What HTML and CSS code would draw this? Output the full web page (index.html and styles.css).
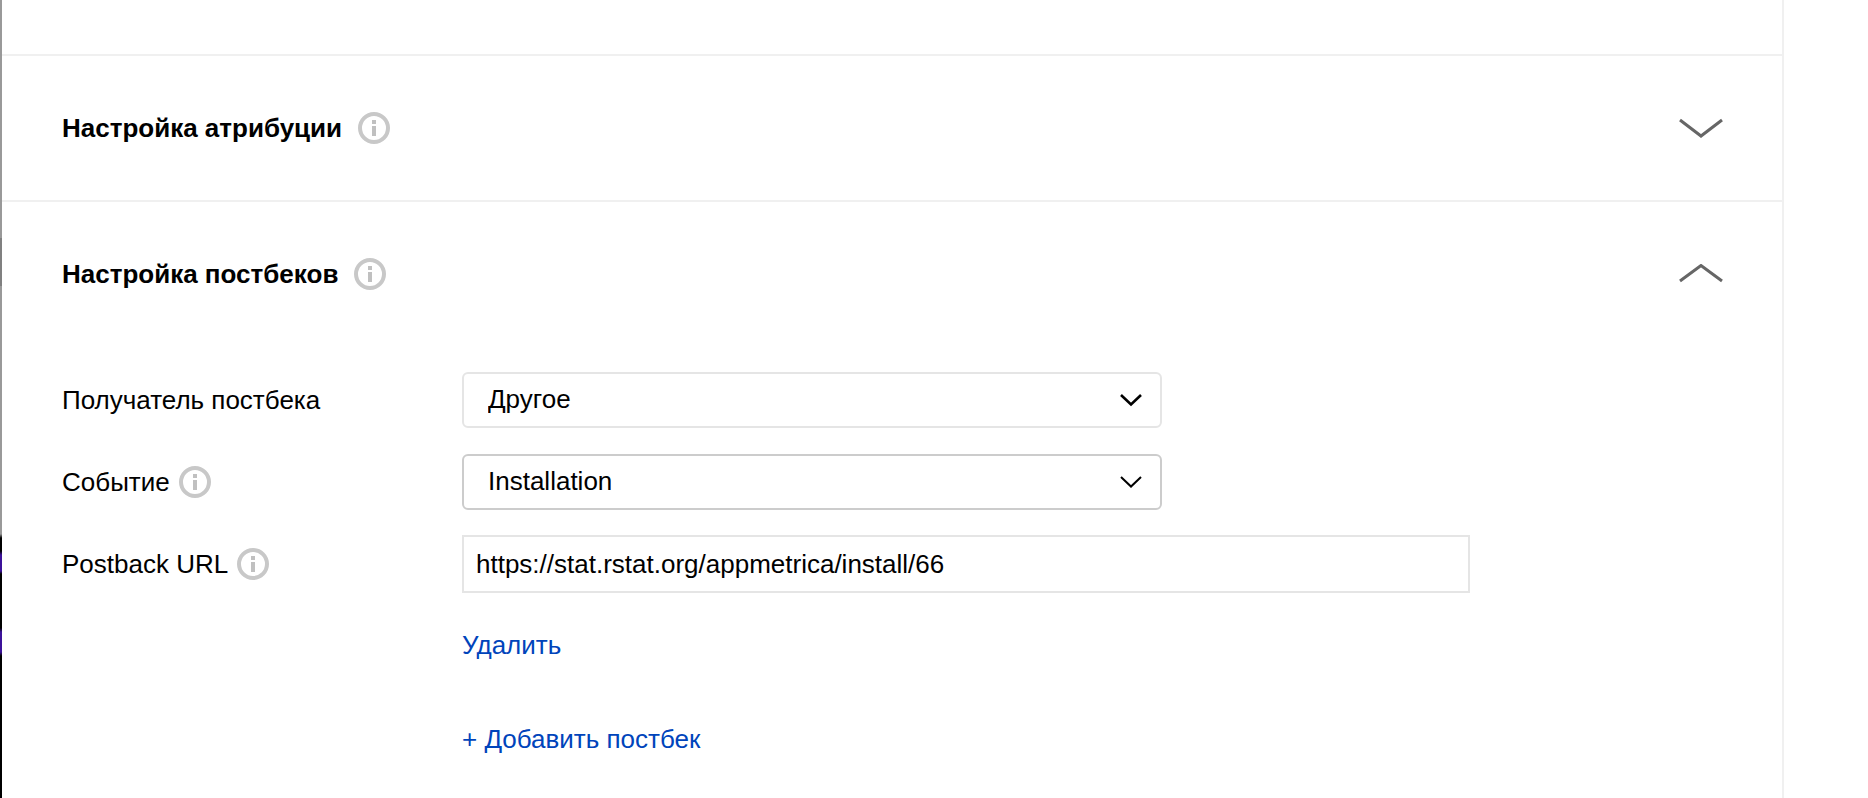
FILE: index.html
```html
<!DOCTYPE html>
<html lang="ru">
<head>
<meta charset="utf-8">
<meta name="viewport" content="width=device-width, initial-scale=1">
<title>Настройка постбеков</title>
<link rel="stylesheet" href="styles.css">
</head>
<body>
<svg class="sprite" aria-hidden="true">
  <symbol id="info" viewBox="0 0 32 32">
    <circle cx="16" cy="16" r="14" fill="none" stroke="#c8c8c8" stroke-width="4"/>
    <path d="M14 8h4v4h-4zM14 14h4v10h-4z" fill="#c0c0c0"/>
  </symbol>
  <symbol id="wide-down" viewBox="0 0 44 20">
    <path d="M1 2L22 18L43 2" fill="none" stroke="#666" stroke-width="3"/>
  </symbol>
  <symbol id="wide-up" viewBox="0 0 44 20">
    <path d="M1 17L22 1.5L43 17" fill="none" stroke="#666" stroke-width="3"/>
  </symbol>
</svg>
<div class="layout">
  <div class="edge"></div>
  <main class="panel">
    <div class="previous"></div>
    <section class="section">
      <header class="section-head">
        <h2 class="title">Настройка атрибуции</h2>
        <button class="icon-button" type="button" aria-label="Справка об атрибуции"><svg class="info"><use href="#info"/></svg></button>
        <button class="icon-button toggle" type="button" aria-label="Развернуть"><svg class="wide"><use href="#wide-down"/></svg></button>
      </header>
    </section>
    <section class="section">
      <header class="section-head">
        <h2 class="title">Настройка постбеков</h2>
        <button class="icon-button" type="button" aria-label="Справка о постбеках"><svg class="info"><use href="#info"/></svg></button>
        <button class="icon-button toggle" type="button" aria-label="Свернуть"><svg class="wide"><use href="#wide-up"/></svg></button>
      </header>
      <form class="form">
        <div class="row">
          <div class="caption"><label for="receiver">Получатель постбека</label></div>
          <div class="picker">
            <select class="select" id="receiver"><option>Другое</option></select>
            <svg class="arrow" viewBox="0 0 24 14" aria-hidden="true"><path d="M2 2L12 11.5L22 2" fill="none" stroke="#000" stroke-width="2.6"/></svg>
          </div>
        </div>
        <div class="row">
          <div class="caption"><label for="event">Событие</label>
            <button class="icon-button" type="button" aria-label="Справка о событии"><svg class="info"><use href="#info"/></svg></button></div>
          <div class="picker">
            <select class="select select-strong" id="event"><option>Installation</option></select>
            <svg class="arrow" viewBox="0 0 24 14" aria-hidden="true"><path d="M2 2L12 11.5L22 2" fill="none" stroke="#000" stroke-width="2"/></svg>
          </div>
        </div>
        <div class="row">
          <div class="caption"><label for="url">Postback URL</label>
            <button class="icon-button" type="button" aria-label="Справка о Postback URL"><svg class="info"><use href="#info"/></svg></button></div>
          <input class="input" id="url" type="text" value="https://stat.rstat.org/appmetrica/install/66">
        </div>
        <div class="actions">
          <a class="link" href="#delete">Удалить</a>
          <a class="link" href="#add">+ Добавить постбек</a>
        </div>
      </form>
    </section>
  </main>
</div>
</body>
</html>
```
FILE: styles.css
```css
* {
  box-sizing: border-box;
}

body {
  margin: 0;
  background: #fff;
  color: #000;
  font: 26px/32px "Liberation Sans", Arial, sans-serif;
}

.sprite {
  display: none;
}

.layout {
  display: flex;
  min-height: 100vh;
  padding-right: 84px;
}

.edge {
  flex: none;
  width: 2px;
  background: linear-gradient(#999 238px, #808080 238px 286px, #999 286px 534px, #000 538px 551px, #3c129a 555px 571px, #000 574px 628px, #3c129a 632px 652px, #000 656px);
}

.panel {
  flex: 1;
  min-width: 0;
  border-right: 2px solid #f0f0f0;
}

.previous {
  height: 54px;
}

.section {
  padding: 0 59px 0 60px;
  border-top: 2px solid #f0f0f0;
}

.section-head {
  display: flex;
  align-items: center;
  gap: 16px;
  height: 144px;
}

.title {
  margin: 0;
  font-size: 26px;
  font-weight: 700;
}

.icon-button {
  display: block;
  padding: 0;
  border: 0;
  background: none;
  cursor: pointer;
}

.toggle {
  margin-left: auto;
}

.info {
  display: block;
  width: 32px;
  height: 32px;
}

.wide {
  display: block;
  width: 44px;
  height: 20px;
}

.form {
  display: flex;
  flex-direction: column;
  gap: 24px;
  padding: 25px 0 40px;
}

.row {
  display: grid;
  grid-template-columns: 400px minmax(0, 1fr);
  align-items: center;
  height: 58px;
}

.caption {
  display: flex;
  align-items: center;
  gap: 9px;
}

.picker {
  position: relative;
  max-width: 700px;
}

.select {
  display: block;
  width: 100%;
  height: 56px;
  padding: 0 60px 2px 24px;
  border: 2px solid #e5e5e5;
  border-radius: 6px;
  background: #fff;
  color: #000;
  font: inherit;
  appearance: none;
}

.select-strong {
  border-color: #ccc;
}

.arrow {
  position: absolute;
  top: 21px;
  right: 19px;
  width: 24px;
  height: 14px;
  pointer-events: none;
}

.input {
  width: 100%;
  max-width: 1008px;
  height: 58px;
  padding: 0 12px;
  border: 2px solid #e5e5e5;
  background: #fff;
  color: #000;
  font: inherit;
}

.actions {
  display: flex;
  flex-direction: column;
  align-items: flex-start;
  gap: 62px;
  padding: 12px 0 0 400px;
}

.link {
  color: #04b;
  text-decoration: none;
}
```
